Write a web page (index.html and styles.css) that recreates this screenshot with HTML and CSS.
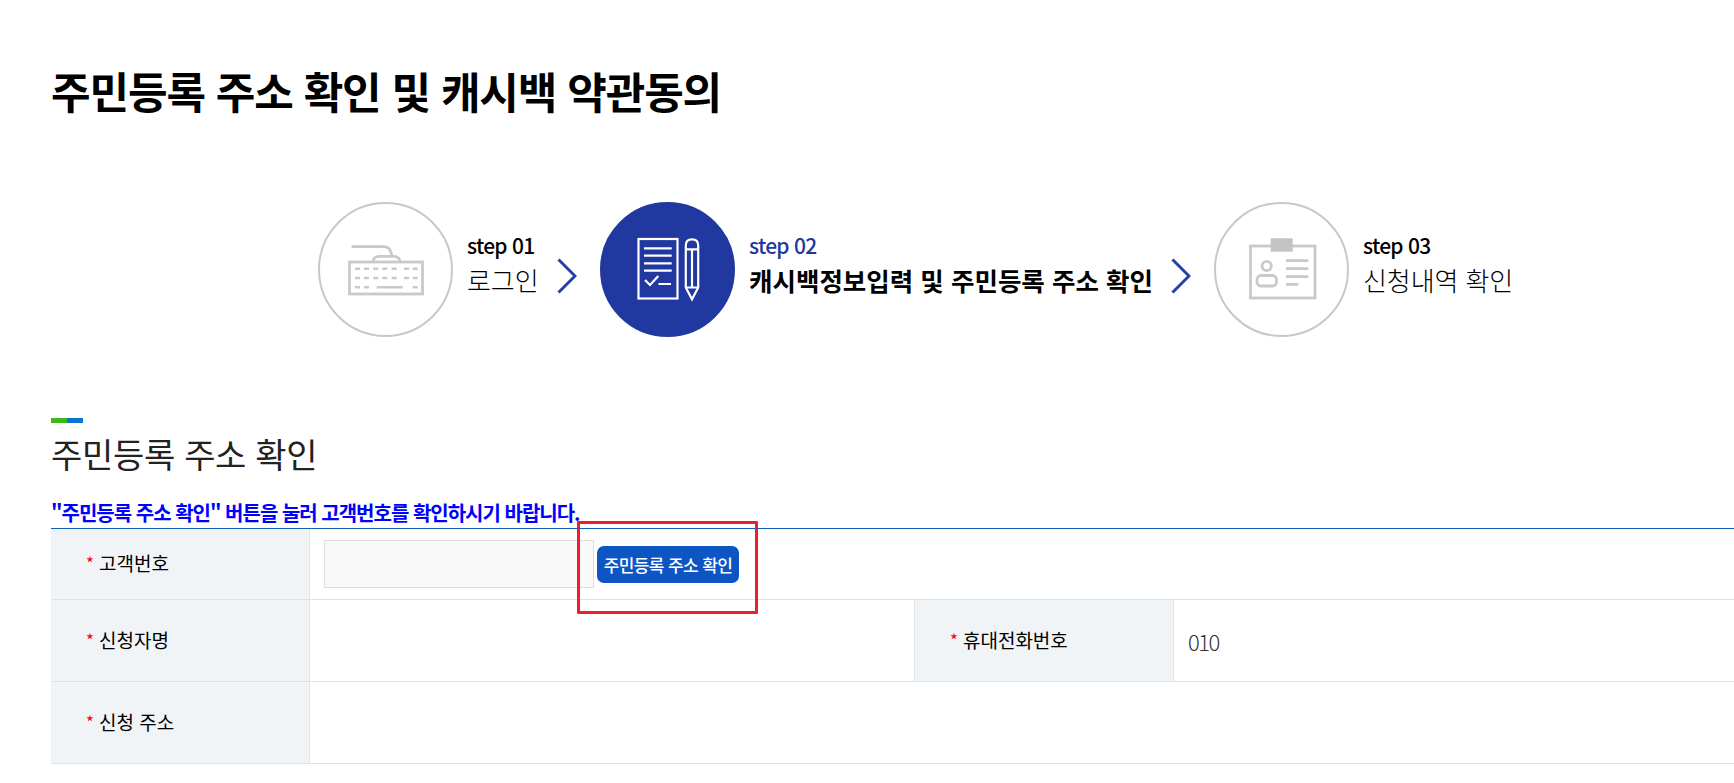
FILE: index.html
```html
<!DOCTYPE html>
<html lang="ko">
<head>
<meta charset="utf-8">
<title>주민등록 주소 확인 및 캐시백 약관동의</title>
<link rel="stylesheet" href="styles.css">
</head>
<body>
<main class="page">
  <h1 class="title">주민등록 주소 확인 및 캐시백 약관동의</h1>

  <ol class="steps">
    <li class="step step-one">
      <div class="circle">
        <svg class="icon" viewBox="0 0 135 135" width="135" height="135" fill="none" stroke="#c9c9c9" stroke-width="2.8">
          <rect x="31.5" y="60" width="73" height="32"/>
          <path d="M33.5 44.7H66Q73 44.7 74 55"/>
          <path d="M55 59Q56 54.5 61 54.3H76Q81 54.5 82 59"/>
          <path stroke-width="2.4" d="M37 66.7h5M46 66.7h5M55.3 66.7h5M64.3 66.7h5M73.7 66.7h5M86 66.7h5M94.7 66.7h5M37 76h5M46 76h5M55.3 76h5M64.3 76h5M73.7 76h5M86 76h5M94.7 76h5M37 85.3h5M46 85.3h5M58.7 85.3h26M94.7 85.3h5"/>
        </svg>
      </div>
      <div class="step-text">
        <p class="step-no">step 01</p>
        <p class="step-name">로그인</p>
      </div>
      <svg class="arrow" viewBox="0 0 20 36" width="20" height="36" fill="none" stroke="#2541a8" stroke-width="3"><path d="M1.5 1.5L18 18 1.5 34.5"/></svg>
    </li>
    <li class="step step-two">
      <div class="circle circle-on">
        <svg class="icon" viewBox="0 0 135 135" width="135" height="135" fill="none" stroke="#fff" stroke-width="2.2">
          <rect x="38.5" y="37" width="39" height="59.5"/>
          <path d="M44 46.3H71.7M44 53.7H71.7M44 61.3H71.7M44 68.7H71.7M58.5 82H71"/>
          <path d="M45 78l5 5 8.3-9"/>
          <path d="M85.8 85.5V43.5Q85.8 37.3 92 37.3T98.2 43.5V85.5L92 97.3Z"/>
          <path d="M85.8 47.3H98.2M85.8 85.5H98.2M92 47.3V85.5"/>
        </svg>
      </div>
      <div class="step-text">
        <p class="step-no step-no-on">step 02</p>
        <p class="step-name step-name-on">캐시백정보입력 및 주민등록 주소 확인</p>
      </div>
      <svg class="arrow arrow-two" viewBox="0 0 20 36" width="20" height="36" fill="none" stroke="#2541a8" stroke-width="3"><path d="M1.5 1.5L18 18 1.5 34.5"/></svg>
    </li>
    <li class="step step-three">
      <div class="circle">
        <svg class="icon" viewBox="0 0 135 135" width="135" height="135" fill="none" stroke="#c9c9c9" stroke-width="2.8">
          <rect x="36.5" y="44" width="64.5" height="52"/>
          <rect x="56.7" y="36.3" width="22" height="13.4" fill="#c4c4c4" stroke="none"/>
          <circle cx="52.7" cy="64" r="4.7"/>
          <rect x="43" y="73.5" width="19.5" height="10.5" rx="4"/>
          <path d="M72 58.7H94.3M72 66.7H94.3M72 74.7H94.3M72 82.3H84.3"/>
        </svg>
      </div>
      <div class="step-text">
        <p class="step-no">step 03</p>
        <p class="step-name">신청내역 확인</p>
      </div>
    </li>
  </ol>

  <section class="section">
    <div class="accent"><span class="accent-green"></span><span class="accent-blue"></span></div>
    <h2 class="section-title">주민등록 주소 확인</h2>
    <p class="notice">"주민등록 주소 확인" 버튼을 눌러 고객번호를 확인하시기 바랍니다.</p>

    <div class="form-table">
      <div class="row row-first">
        <div class="label"><span class="star">*</span>고객번호</div>
        <div class="cell cell-grow">
          <input class="field" type="text" aria-label="고객번호">
          <button class="confirm" type="button">주민등록 주소 확인</button>
        </div>
      </div>
      <div class="row">
        <div class="label"><span class="star">*</span>신청자명</div>
        <div class="cell cell-name"></div>
        <div class="label label-side"><span class="star">*</span>휴대전화번호</div>
        <div class="cell cell-grow cell-phone">010</div>
      </div>
      <div class="row">
        <div class="label"><span class="star">*</span>신청 주소</div>
        <div class="cell cell-grow"></div>
      </div>
      <div class="highlight"></div>
    </div>
  </section>
</main>
</body>
</html>
```

FILE: styles.css
```css
* { box-sizing: border-box; }
html, body { margin: 0; padding: 0; background: #fff; }
body {
  width: 1734px;
  height: 783px;
  overflow: hidden;
  font-family: "Noto Sans CJK KR", "Noto Sans", sans-serif;
  color: #000;
}
.page { padding: 60px 0 0 51px; }
p { margin: 0; }

.title {
  margin: 0;
  font-size: 43px;
  line-height: 60px;
  font-weight: 700;
  color: #000;
  letter-spacing: -1.1px;
}

.steps {
  list-style: none;
  display: flex;
  margin: 82px 0 0;
  padding: 0 0 0 267px;
  height: 135px;
}
.step { display: flex; align-items: flex-start; }
.step-one { width: 282px; }
.step-two { width: 614px; }
.circle {
  flex: none;
  width: 135px;
  height: 135px;
  border: 2px solid #c8c8c8;
  border-radius: 50%;
  display: flex;
  align-items: center;
  justify-content: center;
  background: #fff;
}
.circle-on { background: #2038a0; border-color: #2038a0; }
.icon { flex: none; margin: -2px; }
.step-text { margin: 28px 0 0 14px; }
.step-no {
  font-size: 21px;
  line-height: 30px;
  font-weight: 500;
  letter-spacing: -0.7px;
  color: #000;
}
.step-no-on { color: #2038a0; }
.step-name {
  font-size: 26px;
  line-height: 40px;
  font-weight: 300;
  letter-spacing: -0.1px;
  color: #000;
  white-space: nowrap;
}
.step-name-on { font-weight: 700; font-size: 25.5px; letter-spacing: 0; }
.arrow { flex: none; margin: 56px 0 0 20px; }
.step-one .arrow { margin-left: 19px; }
.arrow-two { margin-left: 18px; }

.section { margin-top: 81px; }
.accent { display: flex; width: 32px; height: 5px; }
.accent-green { flex: 1; background: #3cb81c; }
.accent-blue { flex: 1; background: #0a75d6; }
.section-title {
  margin: 9px 0 0;
  font-size: 34px;
  line-height: 44px;
  font-weight: 400;
  letter-spacing: -0.3px;
  color: #222;
}
.notice {
  margin-top: 23px;
  font-size: 20px;
  line-height: 28px;
  font-weight: 700;
  color: #0000ff;
  letter-spacing: -1px;
  white-space: nowrap;
}

.form-table {
  position: relative;
  border-top: 1px solid #0b62b8;
  margin-top: 1px;
}
.row {
  display: flex;
  height: 82px;
  border-bottom: 1px solid #e2e2e2;
}
.row-first { height: 71px; }
.label {
  flex: none;
  width: 259px;
  padding-left: 35px;
  padding-bottom: 3px;
  display: flex;
  align-items: center;
  gap: 5px;
  background: #f1f4f7;
  border-right: 1px solid #e2e2e2;
  font-size: 19px;
  font-weight: 400;
  color: #000;
}
.label-side { width: 260px; border-left: 1px solid #e2e2e2; }
.star { color: #f00; font-size: 17px; }
.cell { display: flex; align-items: center; }
.cell-name { flex: none; width: 604px; }
.cell-grow { flex: 1; }
.cell-phone {
  padding-left: 14px;
  font-size: 22px;
  font-weight: 300;
  letter-spacing: -1.5px;
  color: #333;
}
.field {
  margin-left: 14px;
  width: 270px;
  height: 48px;
  background: #f9f9f9;
  border: 1px solid #ddd;
  border-radius: 0;
  padding: 0;
}
.confirm {
  margin-left: 3px;
  width: 142px;
  height: 37px;
  padding: 0;
  border: 0;
  border-radius: 7px;
  background: #0e55c4;
  color: #fff;
  font-family: inherit;
  font-size: 17px;
  font-weight: 500;
  letter-spacing: -0.6px;
}
.highlight {
  position: absolute;
  left: 526px;
  top: -8px;
  width: 181px;
  height: 93px;
  border: 3px solid #ee1c2e;
  border-radius: 1px;
}
```
